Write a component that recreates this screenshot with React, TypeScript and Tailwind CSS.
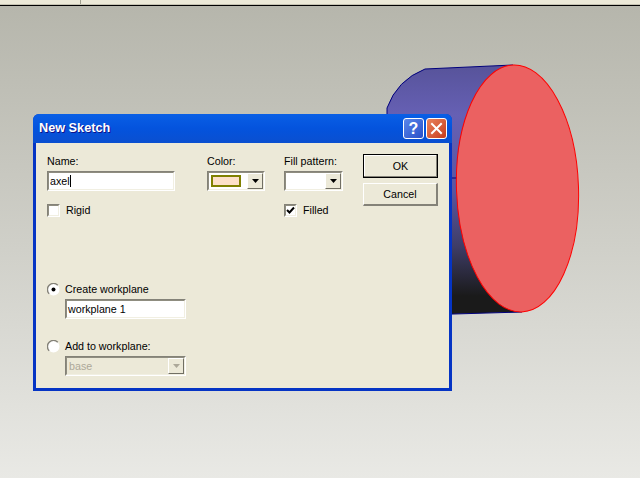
function Sunken({ className = "", children }: { className?: string; children?: React.ReactNode }) {
  return (
    <div className={"box-border border border-t-[#848278] border-l-[#848278] border-r-white border-b-white " + className}>
      <div className="h-full w-full border border-t-[#8f8d80] border-l-[#8f8d80] border-r-[#f1efe2] border-b-[#f1efe2] flex items-stretch box-border">
        {children}
      </div>
    </div>
  );
}

function Arrow({ disabled = false }: { disabled?: boolean }) {
  return (
    <div className="w-[16px] shrink-0 h-full bg-[#ece9d8] border border-t-white border-l-white border-r-[#716f64] border-b-[#716f64] flex items-center justify-center box-border">
      <svg width="7" height="4" viewBox="0 0 7 4">
        <path d="M0 0h7L3.5 4z" fill={disabled ? "#aca899" : "#000"} />
      </svg>
    </div>
  );
}

function Check({ checked = false }: { checked?: boolean }) {
  return (
    <Sunken className="w-[13px] h-[13px] shrink-0">
      <div className="w-full h-full bg-white">
        {checked && (
          <svg width="9" height="9" viewBox="0 0 9 9" className="block">
            <path d="M1 4l2.5 2.5L8 1.5" fill="none" stroke="#000" strokeWidth="2" />
          </svg>
        )}
      </div>
    </Sunken>
  );
}

function Radio({ checked = false }: { checked?: boolean }) {
  return (
    <svg width="13" height="13" viewBox="0 0 13 13" className="shrink-0">
      <circle cx="6.5" cy="6.5" r="6" fill="#fff" />
      <path d="M2.2 10.8A6 6 0 0 1 10.8 2.2" fill="none" stroke="#848278" strokeWidth="1.4" />
      {checked && <circle cx="6.5" cy="6.5" r="2" fill="#000" />}
    </svg>
  );
}

function Scene() {
  return (
    <svg width="640" height="472" viewBox="0 6 640 472" className="absolute left-0 top-0">
      <defs>
        <linearGradient id="body" x1="0" y1="0" x2="0" y2="1">
          <stop offset="0" stopColor="#57539a" />
          <stop offset="0.2" stopColor="#6660b4" />
          <stop offset="0.5" stopColor="#5a56a0" />
          <stop offset="0.72" stopColor="#3f3d68" />
          <stop offset="0.92" stopColor="#1a1a1a" />
          <stop offset="1" stopColor="#1a1a1a" />
        </linearGradient>
      </defs>
      <path d="M513 65 L425 69 Q397 80 387 108 L387 316 L522 312 Z" fill="url(#body)" stroke="#00007c" strokeWidth="1" />
      <path d="M440 178H460" stroke="#00007c" strokeWidth="1" />
      <ellipse cx="517.5" cy="188.5" rx="61" ry="123.5" transform="rotate(-2 517.5 188.5)" fill="#eb6161" stroke="#ff0000" strokeWidth="1" />
    </svg>
  );
}

export default function App() {
  return (
    <div className="w-[640px] h-[478px] overflow-hidden relative flex flex-col font-['Liberation_Sans',sans-serif] text-[10.7px] text-black bg-[#ece9d8]">
      <div className="h-[5px] bg-[#ece9d8] border-b border-[#c5c2b2] shrink-0 box-border">
        <div className="ml-[80px] w-[1px] h-full bg-[#a0a090]" />
      </div>
      <div className="h-[1px] bg-black shrink-0" />
      <div className="flex-1 relative bg-gradient-to-b from-[#b6b6ac] to-[#e9e9e5]">
        <Scene />
        <div className="absolute left-[33px] top-[108px] w-[419px] h-[277px] rounded-t-[6px] bg-[#0534c4] flex flex-col overflow-hidden">
          <div className="h-[29px] shrink-0 bg-gradient-to-b from-[#0a5fe6] via-[#0453dd] to-[#0a4fd0] flex items-center pl-[6px] pr-[5px] gap-[2px]">
            <span className="flex-1 font-bold text-white text-[12.7px] [text-shadow:1px_1px_#0f1089]">New Sketch</span>
            <div className="w-[21px] h-[21px] rounded-[3px] border border-white bg-gradient-to-br from-[#5a86ea] to-[#2a4fc8] text-white font-bold text-[16px] flex items-center justify-center">?</div>
            <div className="w-[21px] h-[21px] rounded-[3px] border border-white bg-gradient-to-br from-[#e8825c] to-[#c8391a] flex items-center justify-center">
              <svg width="13" height="13" viewBox="0 0 13 13">
                <path d="M2 2l9 9M11 2l-9 9" stroke="#fff" strokeWidth="2" strokeLinecap="square" />
              </svg>
            </div>
          </div>
          <div className="mx-[3px] mb-[3px] flex-1 bg-[#ece9d8] flex pl-[11px] pt-[12px]">
            <div className="w-[160px] flex flex-col">
              <div className="h-[16px] leading-[13px]">Name:</div>
              <Sunken className="w-[128px] h-[20px]">
                <div className="flex-1 bg-white pl-[1px] leading-[16px]">axe<span className="border-r border-black">l</span></div>
              </Sunken>
              <div className="mt-[13px] flex items-center gap-[6px] h-[13px]">
                <Check />
                <span>Rigid</span>
              </div>
              <div className="mt-[66px] flex items-center gap-[5px] h-[13px]">
                <Radio checked />
                <span>Create workplane</span>
              </div>
              <Sunken className="ml-[18px] mt-[3px] w-[121px] h-[20px]">
                <div className="flex-1 bg-white pl-[1px] leading-[16px]">workplane 1</div>
              </Sunken>
              <div className="mt-[21px] flex items-center gap-[5px] h-[13px]">
                <Radio />
                <span>Add to workplane:</span>
              </div>
              <Sunken className="ml-[18px] mt-[3px] w-[121px] h-[20px]">
                <div className="flex-1 bg-[#ece9d8] pl-[2px] leading-[16px] text-[#aca899]">base</div>
                <Arrow disabled />
              </Sunken>
            </div>
            <div className="w-[77px] flex flex-col">
              <div className="h-[16px] leading-[13px]">Color:</div>
              <Sunken className="w-[58px] h-[20px]">
                <div className="flex-1 bg-white p-[2px]">
                  <div className="w-[30px] h-[12px] bg-[#fde0c8] border-2 border-[#808000] box-border" />
                </div>
                <Arrow />
              </Sunken>
            </div>
            <div className="w-[79px] flex flex-col">
              <div className="h-[16px] leading-[13px]">Fill pattern:</div>
              <Sunken className="w-[59px] h-[20px]">
                <div className="flex-1 bg-white" />
                <Arrow />
              </Sunken>
              <div className="mt-[13px] flex items-center gap-[6px] h-[13px]">
                <Check checked />
                <span>Filled</span>
              </div>
            </div>
            <div className="flex flex-col gap-[5px] -mt-[1px]">
              <div className="w-[75px] h-[24px] border border-black bg-[#ece9d8] shadow-[inset_-1px_-1px_#848278,inset_1px_1px_#fff] flex items-center justify-center">OK</div>
              <div className="w-[75px] h-[23px] bg-[#ece9d8] border-t border-l border-white border-r-2 border-b-2 border-r-[#848278] border-b-[#848278] flex items-center justify-center">Cancel</div>
            </div>
          </div>
        </div>
      </div>
    </div>
  );
}
